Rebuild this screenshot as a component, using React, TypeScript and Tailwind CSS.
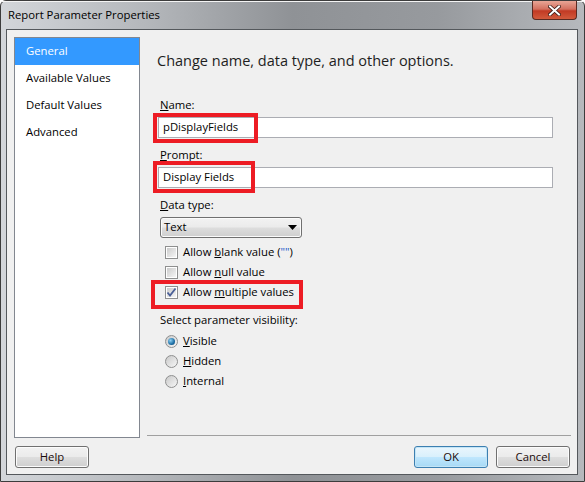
import type { ReactNode } from "react";

const FONT = { fontFamily: '"Open Sans", "Noto Sans", "Liberation Sans", sans-serif' };

function CheckBox({ checked }: { checked?: boolean }) {
  return (
    <span className="relative inline-flex h-[13px] w-[13px] shrink-0 items-center justify-center border border-[#8e8f8f] bg-white">
      <span className="absolute inset-[1px] bg-gradient-to-br from-[#cbcbcb] to-[#f6f6f6]" />
      {checked && (
        <svg className="relative" width="11" height="11" viewBox="0 0 11 11">
          <path d="M1.5 5.5 L4 8.5 L9.5 1.5" fill="none" stroke="#4a5f97" strokeWidth="1.8" />
        </svg>
      )}
    </span>
  );
}

function Radio({ checked }: { checked?: boolean }) {
  return (
    <span className="relative inline-flex h-[13px] w-[13px] shrink-0 items-center justify-center rounded-full border border-[#8e8f8f] bg-gradient-to-br from-[#c9c9c9] to-[#f7f7f7]">
      {checked && (
        <span className="h-[7px] w-[7px] rounded-full bg-[radial-gradient(circle_at_35%_35%,#8fd0f2,#1d6fa5_60%,#0b3f6b)]" />
      )}
    </span>
  );
}

function Button({ children, focused }: { children: ReactNode; focused?: boolean }) {
  return (
    <div
      className={
        "flex h-[22px] w-[74px] items-center justify-center rounded-[3px] border text-[#1a0a0a] " +
        (focused
          ? "border-[#3c7fb1] bg-[linear-gradient(#eaf6fd_0%,#d9f0fc_48%,#bee6fd_52%,#a7d9f5_100%)] shadow-[inset_0_0_0_1px_#c4e5f6]"
          : "border-[#707070] bg-[linear-gradient(#f2f2f2_0%,#ebebeb_48%,#dddddd_52%,#cfcfcf_100%)] shadow-[inset_0_0_0_1px_#fcfcfc]")
      }
    >
      {children}
    </div>
  );
}

function RedMark({ className }: { className: string }) {
  return <div className={"pointer-events-none absolute border-[4px] border-[#ed1c24] " + className} />;
}

export default function App() {
  const nav = ["General", "Available Values", "Default Values", "Advanced"];

  return (
    <div className="h-[482px] w-[585px] overflow-hidden bg-white text-[11.3px]" style={FONT}>
      <div className="relative flex h-[482px] w-[585px] flex-col rounded-t-[6px] border border-[#3c3c3c] bg-[linear-gradient(90deg,#d3d6da_0%,#b4b7bb_25%,#8f9296_50%,#979a9e_75%,#b6b9bd_100%)]">
        {/* title bar */}
        <div className="flex h-[28px] items-center border-t border-[#f4f4f4] pl-[7px] text-black">
          Report Parameter Properties
        </div>
        <div className="absolute right-[7px] top-0 flex h-[19px] w-[45px] items-center justify-center rounded-b-[4px] border border-t-0 border-[#5a2a22] bg-[linear-gradient(#e8a596_0%,#d3705f_45%,#c23a24_55%,#d25a3c_100%)]">
          <svg width="13" height="11" viewBox="0 0 13 11">
            <path d="M2 1.5 L11 9.5 M11 1.5 L2 9.5" stroke="#3a1a14" strokeWidth="3.6" strokeLinecap="square" />
            <path d="M2 1.5 L11 9.5 M11 1.5 L2 9.5" stroke="#ffffff" strokeWidth="2" strokeLinecap="square" />
          </svg>
        </div>

        {/* client area */}
        <div className="ml-[5px] mr-[6px] flex h-[446px] flex-col border border-[#54585c] bg-[#f0f0f0] text-black">
          <div className="flex pl-[7px] pt-[7px]">
            {/* navigation list */}
            <div className="h-[401px] w-[126px] border border-[#828790] bg-white">
              {nav.map((item, i) => (
                <div
                  key={item}
                  className={
                    "flex h-[27px] items-center pl-[11px] " + (i === 0 ? "bg-[#3399ff] text-white" : "text-black")
                  }
                >
                  {item}
                </div>
              ))}
            </div>

            {/* page */}
            <div className="ml-[7px] flex h-[399px] w-[424px] flex-col border-b border-[#a0a0a0] pl-[10px]">
              <div className="mt-[14px] text-[14.5px] leading-[20px] text-[#1e1e1e]">
                Change name, data type, and other options.
              </div>

              <div className="mt-[26px] pl-[3px] leading-[16px]">
                <u>N</u>ame:
              </div>
              <div className="relative mt-[4px] ml-[1px] flex h-[21px] w-[395px] items-center border border-[#abadb3] bg-white pl-[4px]">
                pDisplayFields
                <RedMark className="-left-[6px] -top-[5px] h-[30px] w-[105px]" />
              </div>

              <div className="mt-[9px] pl-[3px] leading-[16px]">
                <u>P</u>rompt:
              </div>
              <div className="relative mt-[4px] ml-[1px] flex h-[21px] w-[395px] items-center border border-[#abadb3] bg-white pl-[4px]">
                Display Fields
                <RedMark className="-left-[6px] -top-[7px] h-[32px] w-[102px]" />
              </div>

              <div className="mt-[9px] pl-[3px] leading-[16px]">
                <u>D</u>ata type:
              </div>
              <div className="relative mt-[4px] ml-[3px] flex h-[21px] w-[142px] items-center justify-between rounded-[3px] border border-[#707070] bg-[linear-gradient(#f2f2f2_0%,#ebebeb_48%,#dddddd_52%,#cfcfcf_100%)] pl-[3px] pr-[4px] shadow-[inset_0_0_0_1px_#fbfbfb]">
                <span>Text</span>
                <svg width="9" height="5" viewBox="0 0 9 5">
                  <path d="M0 0 H9 L4.5 5 Z" fill="#000" />
                </svg>
              </div>

              <div className="mt-[4px] flex flex-col pl-[8px]">
                <div className="flex h-[20px] items-center gap-[5px]">
                  <CheckBox />
                  <span>
                    Allow <u>b</u>lank value (<span className="text-[#1a56c9]">""</span>)
                  </span>
                </div>
                <div className="flex h-[20px] items-center gap-[5px]">
                  <CheckBox />
                  <span>
                    Allow <u>n</u>ull value
                  </span>
                </div>
                <div className="relative flex h-[20px] items-center gap-[5px]">
                  <CheckBox checked />
                  <span>
                    Allow <u>m</u>ultiple values
                  </span>
                  <RedMark className="-left-[14px] -top-[2px] h-[29px] w-[152px]" />
                </div>
              </div>

              <div className="mt-[10px] pl-[3px] leading-[16px]">Select parameter visibility:</div>

              <div className="mt-[3px] flex flex-col pl-[8px]">
                <div className="flex h-[20px] items-center gap-[5px]">
                  <Radio checked />
                  <span>
                    <u>V</u>isible
                  </span>
                </div>
                <div className="flex h-[20px] items-center gap-[5px]">
                  <Radio />
                  <span>
                    <u>H</u>idden
                  </span>
                </div>
                <div className="flex h-[20px] items-center gap-[5px]">
                  <Radio />
                  <span>
                    <u>I</u>nternal
                  </span>
                </div>
              </div>
            </div>
          </div>

          {/* buttons */}
          <div className="mt-[8px] flex pl-[8px] pr-[7px]">
            <Button>Help</Button>
            <div className="flex-1" />
            <Button focused>OK</Button>
            <div className="w-[8px]" />
            <Button>Cancel</Button>
          </div>
        </div>
      </div>
    </div>
  );
}
